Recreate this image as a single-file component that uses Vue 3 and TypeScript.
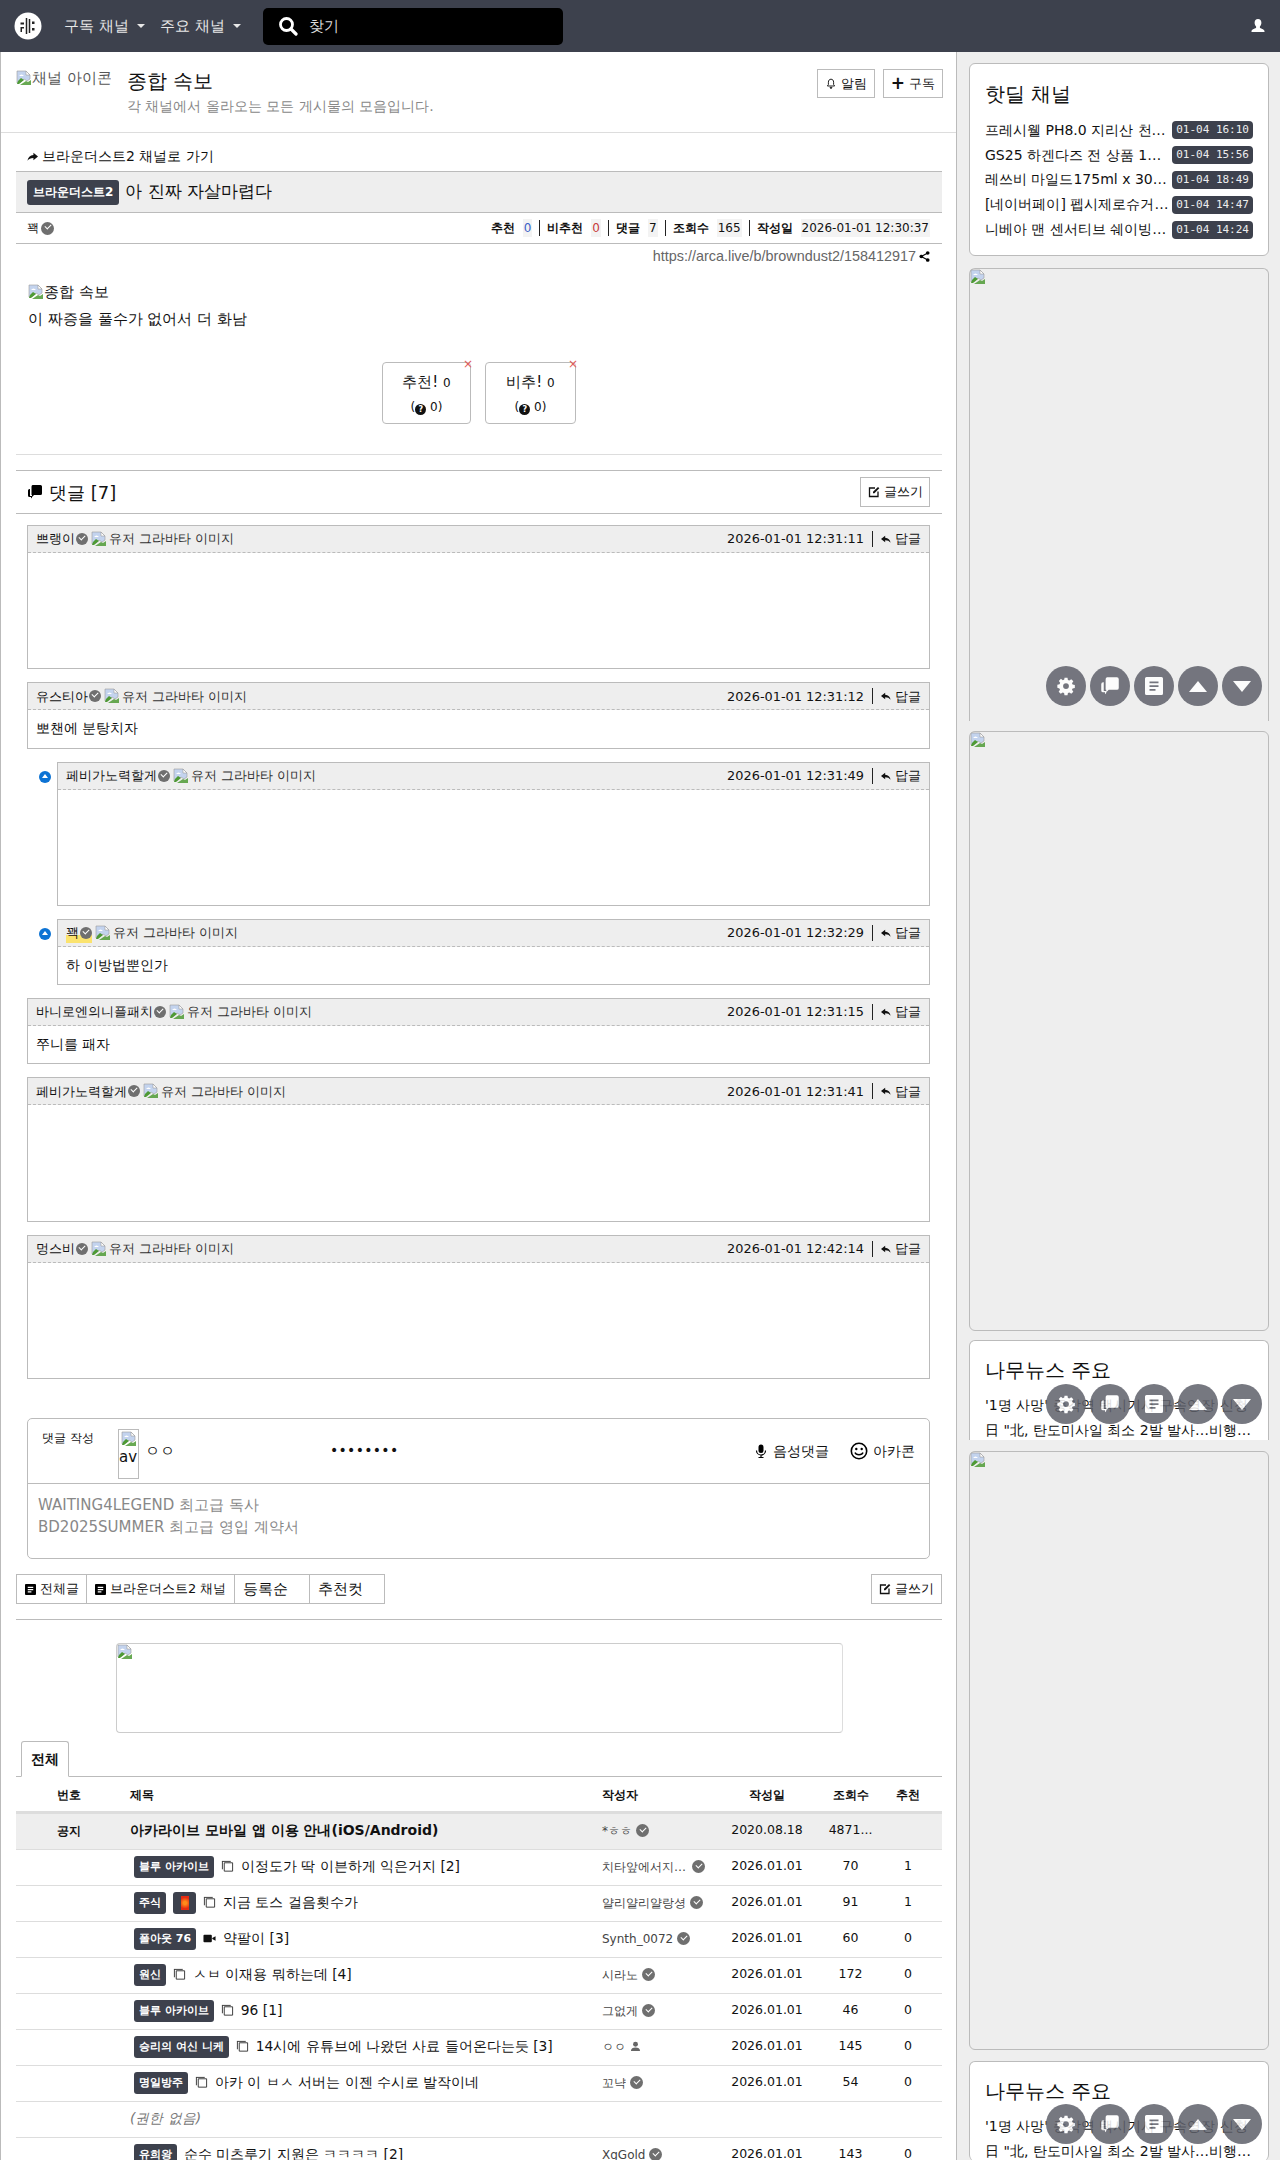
<script setup lang="ts">
interface Cmt { name: string; date: string; text?: string; reply?: boolean; me?: boolean }
const comments: Cmt[] = [
  { name: '쁘랭이', date: '2026-01-01 12:31:11' },
  { name: '유스티아', date: '2026-01-01 12:31:12', text: '뽀챈에 분탕치자' },
  { name: '페비가노력할게', date: '2026-01-01 12:31:49', reply: true },
  { name: '꽥', date: '2026-01-01 12:32:29', text: '하 이방법뿐인가', reply: true, me: true },
  { name: '바니로엔의니플패치', date: '2026-01-01 12:31:15', text: '쭈니를 패자' },
  { name: '페비가노력할게', date: '2026-01-01 12:31:41' },
  { name: '멍스비', date: '2026-01-01 12:42:14' },
]
const deals = [
  ['프레시웰 PH8.0 지리산 천연수 2L', '01-04 16:10'],
  ['GS25 하겐다즈 전 상품 1+1 행사 진행', '01-04 15:56'],
  ['레쓰비 마일드175ml x 30캔 특가 판매', '01-04 18:49'],
  ['[네이버페이] 펩시제로슈거 라임향 특가', '01-04 14:47'],
  ['니베아 맨 센서티브 쉐이빙 폼 200ml', '01-04 14:24'],
]
interface Row { badge?: string; emblem?: boolean; icon?: string; title: string; author?: string; person?: boolean; date?: string; views?: string; votes?: string; denied?: boolean }
const rows: Row[] = [
  { badge: '블루 아카이브', icon: 'doc', title: '이정도가 딱 이븐하게 익은거지 [2]', author: '치타앞에서지랄하기', date: '2026.01.01', views: '70', votes: '1' },
  { badge: '주식', emblem: true, icon: 'doc', title: '지금 토스 걸음횟수가', author: '얄리얄리얄랑셩', date: '2026.01.01', views: '91', votes: '1' },
  { badge: '폴아웃 76', icon: 'video', title: '약팔이 [3]', author: 'Synth_0072', date: '2026.01.01', views: '60', votes: '0' },
  { badge: '원신', icon: 'doc', title: 'ㅅㅂ 이재용 뭐하는데 [4]', author: '시라노', date: '2026.01.01', views: '172', votes: '0' },
  { badge: '블루 아카이브', icon: 'doc', title: '96 [1]', author: '그없게', date: '2026.01.01', views: '46', votes: '0' },
  { badge: '승리의 여신 니케', icon: 'doc', title: '14시에 유튜브에 나왔던 사료 들어온다는듯 [3]', author: 'ㅇㅇ', person: true, date: '2026.01.01', views: '145', votes: '0' },
  { badge: '명일방주', icon: 'doc', title: '아카 이 ㅂㅅ 서버는 이젠 수시로 발작이네', author: '꼬냑', date: '2026.01.01', views: '54', votes: '0' },
  { title: '(권한 없음)', denied: true },
  { badge: '유희왕', title: '순수 미츠루기 지원은 ㅋㅋㅋㅋ [2]', author: 'XgGold', date: '2026.01.01', views: '143', votes: '0' },
]
const fabTops = ['fab-a', 'fab-b', 'fab-c']
const gear = 'M10.2 2h3.6l.5 2.7 1.7.7 2.3-1.6 2.5 2.5-1.6 2.3.7 1.7 2.7.5v3.6l-2.7.5-.7 1.7 1.6 2.3-2.5 2.5-2.3-1.6-1.7.7-.5 2.7h-3.6l-.5-2.7-1.7-.7-2.3 1.6-2.5-2.5 1.6-2.3-.7-1.7L1.6 14v-3.6l2.7-.5.7-1.7-1.6-2.3 2.5-2.5 2.3 1.6 1.7-.7zM12 8.6a3.500 3.500 0 1 0 0 7 3.500 3.500 0 0 0 0-7z'
</script>

<template>
  <div class="page">
    <header class="nav">
      <svg class="logo" viewBox="0 0 28 28" width="28" height="28">
        <circle cx="14" cy="14" r="13.500" fill="#fff" />
        <path d="M12.500 6v16M15.500 7v14" stroke="#222" stroke-width="1.500" fill="none" />
        <path d="M6.500 10.500h3.500v2H6.500zM6.500 15h3.500v1.500H8V20H6.500zM18 9.500h2.500V12H18zM18 16h2.500v2.500H18z" fill="#222" />
      </svg>
      <span class="nav-link">구독 채널<i class="caret"></i></span>
      <span class="nav-link">주요 채널<i class="caret"></i></span>
      <div class="search">
        <svg viewBox="0 0 20 20" width="20" height="20"><circle cx="8.500" cy="8.500" r="6" fill="none" stroke="#fff" stroke-width="2.800" /><path d="M13 13l5 5" stroke="#fff" stroke-width="3.200" stroke-linecap="round" /></svg>
        <span>찾기</span>
      </div>
      <svg class="user" viewBox="0 0 16 16" width="16" height="16"><path d="M8 1c2.200 0 3.400 1.700 3.400 3.800 0 1.500-.6 2.900-1.500 3.600v1.300c0 .6 4.600 1.300 4.600 3.600v.7h-13v-.7c0-2.300 4.600-3 4.600-3.600V8.400c-.9-.7-1.500-2.100-1.500-3.600C4.600 2.700 5.800 1 8 1z" fill="#fff" /></svg>
    </header>

    <div class="body">
      <main class="main">
        <section class="board-head">
          <div class="chan-icon"><svg class="broken" viewBox="0 0 16 16" width="16" height="16"><use href="#broken-img" /></svg>채널 아이콘</div>
          <div class="board-text">
            <div class="board-title">종합 속보</div>
            <div class="board-sub">각 채널에서 올라오는 모든 게시물의 모음입니다.</div>
          </div>
          <div class="board-btns">
            <span class="btn"><svg viewBox="0 0 12 12" width="12" height="12"><path d="M6 1.200c1.700 0 2.600 1.300 2.600 3v2.300l1 1.500H2.400l1-1.500V4.200c0-1.700.9-3 2.600-3zM5 9.400h2L6 10.800z" fill="none" stroke="#222" /></svg>알림</span>
            <span class="btn"><b class="plus">+</b>구독</span>
          </div>
        </section>

        <section class="article">
          <div class="back"><svg viewBox="0 0 12 12" width="11" height="11"><path d="M7 2l5 4-5 4V7.600C4 7.600 2 8.600.5 10.600 1 7 3.400 4.600 7 4.400z" fill="#111" /></svg>브라운더스트2 채널로 가기</div>
          <h1 class="title-bar"><span class="badge big">브라운더스트2</span>아 진짜 자살마렵다</h1>
          <div class="meta">
            <span class="author">꽥<i class="check"></i></span>
            <span class="stats">
              <b>추천</b><em class="blue">0</em><u></u>
              <b>비추천</b><em class="red">0</em><u></u>
              <b>댓글</b><em>7</em><u></u>
              <b>조회수</b><em>165</em><u></u>
              <b>작성일</b><em>2026-01-01 12:30:37</em>
            </span>
          </div>
          <div class="url">https://arca.live/b/browndust2/158412917
            <svg viewBox="0 0 12 12" width="11" height="11"><circle cx="9.500" cy="2.200" r="2" /><circle cx="2.500" cy="6" r="2" /><circle cx="9.500" cy="9.800" r="2" /><path d="M9.500 2.200L2.500 6l7 3.800" fill="none" stroke="#000" stroke-width="1.200" /></svg>
          </div>
          <div class="post">
            <p class="alt"><svg class="broken" viewBox="0 0 16 16" width="16" height="16"><use href="#broken-img" /></svg>종합 속보</p>
            <p>이 짜증을 풀수가 없어서 더 화남</p>
          </div>
          <div class="votes">
            <div class="vote"><i class="x">×</i><div class="v1">추천! <small>0</small></div><div class="v2">(<i class="q">?</i> 0)</div></div>
            <div class="vote"><i class="x">×</i><div class="v1">비추! <small>0</small></div><div class="v2">(<i class="q">?</i> 0)</div></div>
          </div>
          <hr class="light" />
          <div class="cmt-head">
            <span class="cmt-title">
              <svg viewBox="0 0 16 16" width="16" height="16"><path d="M5.500 1h8A1.500 1.500 0 0 1 15 2.500v7a1.500 1.500 0 0 1-1.500 1.500H7l-2 2v-2H4.500V3A2 2 0 0 1 5.500 1z" /><path d="M1 6.500A1.500 1.500 0 0 1 2.500 5H3v7h2v1.500l-1 1v-1.500H2.500A1.500 1.500 0 0 1 1 11.500z" /></svg>
              댓글 [7]
            </span>
            <span class="btn write"><svg viewBox="0 0 12 12" width="12" height="12"><path d="M7 2H1.500v8.500H10V5.500" fill="none" stroke="#111" stroke-width="1.300" /><path d="M5 7.300V5.800L10 1l1.300 1.300L6.400 7.300z" fill="#111" /></svg>글쓰기</span>
          </div>
          <div class="cmts">
            <div v-for="(c, i) in comments" :key="i" class="cmt-row" :class="{ reply: c.reply }">
              <i v-if="c.reply" class="reply-dot"></i>
              <div class="cmt">
                <div class="cmt-top">
                  <span class="cmt-name" :class="{ me: c.me }">{{ c.name }}<i class="check sm"></i></span>
                  <span class="cmt-alt"><svg class="broken" viewBox="0 0 16 16" width="16" height="16"><use href="#broken-img" /></svg>유저 그라바타 이미지</span>
                  <span class="cmt-right">{{ c.date }}<u></u><svg viewBox="0 0 12 12" width="10" height="10"><path d="M5 2L0 6l5 4V7.600c3 0 5 1 6.500 3C11 7 8.600 4.600 5 4.400z" fill="#111" /></svg>답글</span>
                </div>
                <div class="cmt-body" :class="{ tall: !c.text }">{{ c.text }}</div>
              </div>
            </div>
          </div>

          <div class="form">
            <div class="form-top">
              <span class="form-label">댓글 작성</span>
              <span class="avatar"><svg class="broken" viewBox="0 0 16 16" width="16" height="16"><use href="#broken-img" /></svg><span>av</span></span>
              <span class="form-name">ㅇㅇ</span>
              <span class="dots">••••••••</span>
              <span class="form-act">
                <svg viewBox="0 0 14 14" width="14" height="14"><rect x="4.500" y="0.500" width="5" height="8.500" rx="2.500" /><path d="M2.500 6.500a4.500 4.500 0 0 0 9 0M7 11v2.500M4.500 13.500h5" fill="none" stroke="#000" stroke-width="1.200" /></svg>음성댓글
              </span>
              <span class="form-act">
                <svg viewBox="0 0 18 18" width="18" height="18"><circle cx="9" cy="9" r="7.700" fill="none" stroke="#000" stroke-width="1.600" /><circle cx="6.300" cy="7" r="1.200" /><circle cx="11.700" cy="7" r="1.200" /><path d="M5 10.500c1 3 7 3 8 0" fill="none" stroke="#000" stroke-width="1.400" /></svg>아카콘
              </span>
            </div>
            <div class="form-text">WAITING4LEGEND 최고급 독사<br />BD2025SUMMER 최고급 영입 계약서</div>
          </div>

          <div class="toolbar">
            <span class="seg a"><svg viewBox="0 0 12 12" width="11" height="11"><path d="M1 0h10a1 1 0 0 1 1 1v10a1 1 0 0 1-1 1H1a1 1 0 0 1-1-1V1a1 1 0 0 1 1-1zM3 3v1.300h6V3zm0 2.500v1.300h6V5.500zM3 8v1.300h4V8z" fill-rule="evenodd" /></svg>전체글</span>
            <span class="seg b"><svg viewBox="0 0 12 12" width="11" height="11"><path d="M1 0h10a1 1 0 0 1 1 1v10a1 1 0 0 1-1 1H1a1 1 0 0 1-1-1V1a1 1 0 0 1 1-1zM3 3v1.300h6V3zm0 2.500v1.300h6V5.500zM3 8v1.300h4V8z" fill-rule="evenodd" /></svg>브라운더스트2 채널</span>
            <span class="seg c">등록순</span>
            <span class="seg c">추천컷</span>
            <span class="btn write tool-write"><svg viewBox="0 0 12 12" width="12" height="12"><path d="M7 2H1.500v8.500H10V5.500" fill="none" stroke="#111" stroke-width="1.300" /><path d="M5 7.300V5.800L10 1l1.300 1.300L6.400 7.300z" fill="#111" /></svg>글쓰기</span>
          </div>
          <hr class="mid" />
          <div class="adbox"><svg class="broken" viewBox="0 0 16 16" width="16" height="16"><use href="#broken-img" /></svg></div>
          <div class="tabs"><span class="tab">전체</span></div>

          <div class="grid head">
            <span class="c-num">번호</span><span class="c-title">제목</span><span class="c-author">작성자</span><span class="c-center">작성일</span><span class="c-center">조회수</span><span class="c-center">추천</span>
          </div>
          <div class="grid notice">
            <span class="c-num bold">공지</span>
            <span class="c-title strong">아카라이브 모바일 앱 이용 안내(iOS/Android)</span>
            <span class="c-author">*ㅎㅎ<i class="check tb"></i></span>
            <span class="c-center">2020.08.18</span><span class="c-center">4871...</span><span class="c-center"></span>
          </div>
          <div v-for="(r, i) in rows" :key="i" class="grid row">
            <span class="c-num"></span>
            <span class="c-title line" :class="{ denied: r.denied }">
              <span v-if="r.badge" class="badge">{{ r.badge }}</span>
              <span v-if="r.emblem" class="emblem"><i></i></span>
              <svg v-if="r.icon === 'doc'" class="ticon" viewBox="0 0 14 14" width="13" height="13"><path d="M3.500 3h9v9h-9zM1 1.500h9.500" fill="none" stroke="#333" stroke-width="1" /><path d="M1.500 1.500V10" stroke="#333" /></svg>
              <svg v-if="r.icon === 'video'" class="ticon" viewBox="0 0 14 14" width="13" height="13"><rect x="0.500" y="3" width="9" height="8" rx="1" fill="#111" /><path d="M10 6.500l3.500-2v5l-3.500-2z" fill="#111" /></svg>
              <span>{{ r.title }}</span>
            </span>
            <span class="c-author"><span class="name-clip">{{ r.author }}</span><svg v-if="r.person" viewBox="0 0 12 12" width="11" height="11"><circle cx="6" cy="3.500" r="2.700" fill="#666" /><path d="M1 11c0-3 2.200-4 5-4s5 1 5 4z" fill="#666" /></svg><i v-else-if="r.author" class="check tb"></i></span>
            <span class="c-center">{{ r.date }}</span><span class="c-center">{{ r.views }}</span><span class="c-center">{{ r.votes }}</span>
          </div>
        </section>
      </main>

      <aside class="side">
        <div class="card deal">
          <h5>핫딜 채널</h5>
          <div v-for="d in deals" :key="d[1]" class="deal-row"><span class="deal-t">{{ d[0] }}</span><span class="time">{{ d[1] }}</span></div>
        </div>
        <div class="ad ad1 no-bottom"><svg class="broken" viewBox="0 0 16 16" width="16" height="16"><use href="#broken-img" /></svg>
          <div class="fabs" :class="fabTops[0]">
            <span class="fab"><svg viewBox="0 0 24 24" width="20" height="20"><path :d="gear" fill-rule="evenodd" /></svg></span>
            <span class="fab"><svg viewBox="0 0 16 16" width="20" height="20"><path d="M5.500 1h8A1.500 1.500 0 0 1 15 2.500v7a1.500 1.500 0 0 1-1.500 1.500H7l-2 2v-2H4.500V3A2 2 0 0 1 5.500 1z" /><path d="M1 6.500A1.500 1.500 0 0 1 2.500 5H3v7h2v1.500l-1 1v-1.500H2.500A1.500 1.500 0 0 1 1 11.500z" /></svg></span>
            <span class="fab"><svg viewBox="0 0 12 12" width="18" height="18"><path d="M1 0h10a1 1 0 0 1 1 1v10a1 1 0 0 1-1 1H1a1 1 0 0 1-1-1V1a1 1 0 0 1 1-1zM3 3v1.100h6V3zm0 2.500v1.100h6V5.500zM3 8v1.100h4V8z" fill-rule="evenodd" /></svg></span>
            <span class="fab"><i class="tri up"></i></span>
            <span class="fab"><i class="tri down"></i></span>
          </div>
        </div>
        <div class="ad ad2"><svg class="broken" viewBox="0 0 16 16" width="16" height="16"><use href="#broken-img" /></svg></div>
        <div class="card news news1">
          <h5>나무뉴스 주요</h5>
          <div class="news-t">'1명 사망' 종각역 택시기사 구속영장 신청</div>
          <div class="news-t">日 "北, 탄도미사일 최소 2발 발사…비행거리 900km"</div>
          <div class="fabs" :class="fabTops[1]">
            <span class="fab"><svg viewBox="0 0 24 24" width="20" height="20"><path :d="gear" fill-rule="evenodd" /></svg></span>
            <span class="fab"><svg viewBox="0 0 16 16" width="20" height="20"><path d="M5.500 1h8A1.500 1.500 0 0 1 15 2.500v7a1.500 1.500 0 0 1-1.500 1.500H7l-2 2v-2H4.500V3A2 2 0 0 1 5.500 1z" /><path d="M1 6.500A1.500 1.500 0 0 1 2.500 5H3v7h2v1.500l-1 1v-1.500H2.500A1.500 1.500 0 0 1 1 11.500z" /></svg></span>
            <span class="fab"><svg viewBox="0 0 12 12" width="18" height="18"><path d="M1 0h10a1 1 0 0 1 1 1v10a1 1 0 0 1-1 1H1a1 1 0 0 1-1-1V1a1 1 0 0 1 1-1zM3 3v1.100h6V3zm0 2.500v1.100h6V5.500zM3 8v1.100h4V8z" fill-rule="evenodd" /></svg></span>
            <span class="fab"><i class="tri up"></i></span>
            <span class="fab"><i class="tri down"></i></span>
          </div>
        </div>
        <div class="ad ad3"><svg class="broken" viewBox="0 0 16 16" width="16" height="16"><use href="#broken-img" /></svg></div>
        <div class="card news news2">
          <h5>나무뉴스 주요</h5>
          <div class="news-t">'1명 사망' 종각역 택시기사 구속영장 신청</div>
          <div class="news-t">日 "北, 탄도미사일 최소 2발 발사…비행거리 900km"</div>
          <div class="fabs" :class="fabTops[2]">
            <span class="fab"><svg viewBox="0 0 24 24" width="20" height="20"><path :d="gear" fill-rule="evenodd" /></svg></span>
            <span class="fab"><svg viewBox="0 0 16 16" width="20" height="20"><path d="M5.500 1h8A1.500 1.500 0 0 1 15 2.500v7a1.500 1.500 0 0 1-1.500 1.500H7l-2 2v-2H4.500V3A2 2 0 0 1 5.500 1z" /><path d="M1 6.500A1.500 1.500 0 0 1 2.500 5H3v7h2v1.500l-1 1v-1.500H2.500A1.500 1.500 0 0 1 1 11.500z" /></svg></span>
            <span class="fab"><svg viewBox="0 0 12 12" width="18" height="18"><path d="M1 0h10a1 1 0 0 1 1 1v10a1 1 0 0 1-1 1H1a1 1 0 0 1-1-1V1a1 1 0 0 1 1-1zM3 3v1.100h6V3zm0 2.500v1.100h6V5.500zM3 8v1.100h4V8z" fill-rule="evenodd" /></svg></span>
            <span class="fab"><i class="tri up"></i></span>
            <span class="fab"><i class="tri down"></i></span>
          </div>
        </div>
      </aside>
    </div>

    <svg class="defs" width="0" height="0">
      <symbol id="broken-img" viewBox="0 0 16 16">
        <path d="M1 1h9l4 4v4l-3 2-3-2-3 3-4 1z" fill="#c3d3ee" stroke="#9a9a9a" stroke-width=".6" />
        <path d="M10 1v4h4z" fill="#fff" stroke="#9a9a9a" stroke-width=".6" />
        <path d="M2 11l3-3 3 2-5 4H1z" fill="#4e9a35" />
        <path d="M4 15l6-4 2 1 3-2v5z" fill="#4e9a35" opacity=".85" />
        <path d="M3 6c1.500-2 3.500-2 5 0z" fill="#fff" />
      </symbol>
    </svg>
  </div>
</template>

<style>
html, body { margin: 0; background: #eee; }
</style>

<style scoped>
.page { width: 1280px; height: 2160px; overflow: hidden; background: #eee; color: #111; font: 15px/1.5 "DejaVu Sans", sans-serif; }
.defs { position: absolute; }
.nav { height: 52px; background: #3d414d; display: flex; align-items: center; padding: 0 14px; color: #e8e8e8; }
.logo { margin-right: 22px; }
.nav-link { font-size: 15px; margin-right: 15px; display: flex; align-items: center; }
.caret { width: 0; height: 0; border: 4px solid transparent; border-top-color: #e8e8e8; border-bottom: 0; margin-left: 8px; }
.search { margin-left: 7px; width: 300px; height: 37px; background: #000; border-radius: 5px; display: flex; align-items: center; padding-left: 15px; box-sizing: border-box; gap: 11px; color: #ddd; font-size: 15px; }
.user { margin-left: auto; }
.body { display: flex; }
.main { width: 957px; box-sizing: border-box; background: #fff; border-left: 1px solid #bbb; border-right: 1px solid #bbb; height: 2108px; }
.board-head { height: 80px; border-bottom: 1px solid #ddd; position: relative; display: flex; padding-left: 15px; }
.chan-icon { width: 95px; white-space: nowrap; overflow: hidden; margin-top: 15px; height: 22px; font-size: 15px; color: #555; display: flex; align-items: center; }
.broken { display: inline-block; flex: none; vertical-align: -3px; }
.board-text { margin-left: 16px; padding-top: 15px; }
.board-title { font-size: 20px; line-height: 28px; }
.board-sub { font-size: 14px; color: #888; line-height: 22px; }
.board-btns { margin-left: auto; display: flex; gap: 8px; margin-right: 13px; margin-top: 17px; height: 29px; }
.btn { border: 1px solid #bbb; display: inline-flex; align-items: center; justify-content: center; gap: 4px; font-size: 13px; padding: 0 7px; box-sizing: border-box; height: 29px; background: #fff; }
.plus { font-size: 17px; line-height: 1; font-weight: 700; }
.article { padding: 0 14px 0 15px; }
.back { margin-top: 8px; height: 30px; padding-left: 11px; display: flex; align-items: center; gap: 4px; font-size: 14px; }
.title-bar { margin: 0; height: 42px; background: #eee; border-top: 1px solid #bbb; border-bottom: 1px solid #bbb; box-sizing: border-box; font-size: 17px; font-weight: 400; display: flex; align-items: center; padding-left: 11px; gap: 6px; }
.badge { display: inline-block; background: #3d414d; color: #fff; font-size: 11px; font-weight: 700; border-radius: 3px; padding: 0 5px; line-height: 22px; height: 22px; white-space: nowrap; }
.badge.big { font-size: 12px; line-height: 25px; height: 25px; padding: 0 6px; }
.meta { height: 31px; border-bottom: 1px solid #bbb; box-sizing: border-box; display: flex; align-items: center; justify-content: space-between; padding: 0 12px 0 11px; font-size: 12px; }
.author { display: flex; align-items: center; }
.check { display: inline-block; width: 13px; height: 13px; border-radius: 50%; background: #6f6f6f; position: relative; margin-left: 2px; flex: none; }
.check::after { content: ""; position: absolute; left: 3.500px; top: 2.500px; width: 5px; height: 3px; border-left: 1.500px solid #fff; border-bottom: 1.500px solid #fff; transform: rotate(-45deg); }
.check.sm { width: 12px; height: 12px; margin-left: 1px; }
.check.sm::after { left: 3px; top: 2px; }
.check.tb { margin-left: 4px; }
.stats { display: flex; align-items: center; }
.stats b { font-weight: 700; }
.stats em { font-style: normal; background: #f3f3f3; margin-left: 8px; padding: 0 1px; }
.stats .blue { color: #3b62c8; }
.stats .red { color: #c83b3b; }
.stats u { display: inline-block; width: 1px; height: 16px; background: #222; margin: 0 7px; }
.url { height: 25px; display: flex; justify-content: flex-end; align-items: center; padding-right: 12px; gap: 3px; color: #666; font: 14.400px/1.500 "Liberation Sans", sans-serif; }
.post { padding-left: 12px; margin-top: 10px; font-size: 15px; }
.post p { margin: 0; line-height: 27px; }
.votes { display: flex; justify-content: center; gap: 14px; margin-top: 29px; }
.vote { width: 89px; height: 62px; border: 1px solid #bbb; border-radius: 4px; box-sizing: border-box; position: relative; text-align: center; padding-top: 6px; }
.vote:nth-child(2) { width: 91px; }
.x { position: absolute; right: -3px; top: -5px; color: #e0595a; font-size: 12px; line-height: 12px; font-style: normal; }
.v1 { font-size: 15px; line-height: 26px; }
.v1 small { font-size: 12px; }
.v2 { font-size: 12px; line-height: 22px; }
.q { display: inline-block; width: 11px; height: 11px; border-radius: 50%; background: #111; color: #fff; font-size: 8px; line-height: 11px; font-style: normal; font-weight: 700; vertical-align: -1px; }
hr { border: 0; margin: 0; }
.light { border-top: 1px solid #ddd; margin-top: 30px; }
.cmt-head { margin-top: 15px; height: 44px; border-top: 1px solid #bbb; border-bottom: 1px solid #bbb; box-sizing: border-box; display: flex; align-items: center; justify-content: space-between; padding: 0 12px 0 11px; }
.cmt-title { font-size: 18px; display: flex; align-items: center; gap: 6px; }
.write { gap: 4px; width: 70px; height: 30px; padding: 0; font-size: 13px; }
.cmts { margin: 11px 12px 0 11px; display: flex; flex-direction: column; gap: 13px; }
.cmt-row { display: flex; position: relative; }
.reply { padding-left: 30px; }
.reply-dot { position: absolute; left: 12px; top: 9px; width: 12px; height: 12px; border-radius: 50%; background: #0d73d4; }
.reply-dot::after { content: ""; position: absolute; left: 3px; top: 3px; border: 3px solid transparent; border-bottom: 4px solid #fff; border-top: 0; }
.cmt { flex: 1; border: 1px solid #bbb; box-sizing: border-box; min-width: 0; }
.cmt-top { height: 26px; background: #eee; border-bottom: 1px dashed #bbb; display: flex; align-items: center; padding: 0 8px; font-size: 13px; }
.cmt-name { display: inline-flex; align-items: center; font-size: 13px; }
.me { background: linear-gradient(transparent 60%, #fbe36e 60%); }
.cmt-alt { margin-left: 3px; color: #333; display: inline-flex; align-items: center; font-size: 13px; gap: 2px; }
.cmt-right { margin-left: auto; display: flex; align-items: center; font-size: 12.900px; }
.cmt-right u { width: 1px; height: 16px; background: #222; margin: 0 8px; display: inline-block; }
.cmt-right svg { margin-right: 4px; }
.cmt-body { padding: 8px 8px 0; font-size: 14px; line-height: 20px; height: 37.200px; box-sizing: border-box; }
.cmt-body.tall { height: 115.400px; padding: 0; }
.form { margin: 39px 12px 0 11px; border: 1px solid #bbb; border-radius: 5px; height: 141px; box-sizing: border-box; }
.form-top { height: 64px; border-bottom: 1px solid #bbb; display: flex; align-items: flex-start; padding: 0 14px; position: relative; }
.form-label { font-size: 12px; width: 76px; margin-top: 10px; }
.avatar { width: 21px; height: 50px; border: 1px solid #bbb; box-sizing: border-box; margin-top: 10px; overflow: hidden; display: block; line-height: 20px; font-size: 15px; white-space: nowrap; }
.avatar .broken { display: block; margin: 1px 2px 0; }
.form-name { margin: 22px 0 0 6px; font-size: 15px; line-height: 20px; }
.dots { margin: 21px 0 0 155px; font-size: 14px; letter-spacing: .3px; }
.form-act { margin-top: 22px; font-size: 14px; display: flex; align-items: center; gap: 5px; line-height: 20px; }
.dots + .form-act { margin-left: auto; margin-right: 21px; }
.form-text { padding: 10px 10px; color: #888; font-size: 15px; line-height: 22px; }
.toolbar { margin-top: 15px; display: flex; }
.seg { height: 30px; border: 1px solid #bbb; box-sizing: border-box; display: inline-flex; align-items: center; gap: 4px; font-size: 13px; padding-left: 8px; margin-right: -1px; }
.seg.a { width: 71px; }
.seg.b { width: 149px; }
.seg.c { width: 76px; font-size: 15px; }
.tool-write { margin-left: auto; width: 71px; }
.mid { border-top: 1px solid #bbb; margin-top: 15px; }
.adbox { margin: 23px auto 0; width: 727px; height: 90px; border: 1px solid #ccc; border-right-color: #ddd; border-radius: 4px; box-sizing: border-box; }
.adbox .broken { display: block; }
.tabs { margin-top: 8px; height: 36px; border-bottom: 1px solid #bbb; padding-left: 5px; box-sizing: border-box; display: flex; }
.tab { width: 48px; height: 36px; border: 1px solid #bbb; border-bottom: 1px solid #fff; border-radius: 3px 3px 0 0; background: #fff; box-sizing: border-box; text-align: center; font-size: 14px; font-weight: 700; line-height: 34px; }
.grid { display: grid; grid-template-columns: 106px 472px 113px 120px 47px 68px; align-items: center; font-size: 12px; box-sizing: border-box; }
.head { height: 37px; font-weight: 700; font-size: 12px; border-bottom: 3px solid #ddd; padding-top: 1px; }
.notice { height: 36px; background: #eee; border-bottom: 1px solid #ddd; padding-bottom: 2px; }
.row { height: 36px; border-bottom: 1px solid #ddd; padding-bottom: 2px; }
.c-num { text-align: center; }
.bold { font-weight: 700; }
.c-title { padding-left: 8px; font-size: 14px; min-width: 0; white-space: nowrap; }
.head .c-title { font-size: 12px; }
.strong { font-weight: 700; }
.line { display: flex; align-items: center; padding-left: 12px; gap: 7px; font-size: 13.800px; }
.denied { font-style: italic; color: #777; padding-left: 8px; }
.c-author { padding-left: 8px; display: flex; align-items: center; color: #444; font-size: 12px; white-space: nowrap; min-width: 0; }
.head .c-author { color: #111; }
.name-clip { max-width: 86px; overflow: hidden; text-overflow: ellipsis; flex: none; }
.c-author svg { margin-left: 4px; }
.c-center { text-align: center; white-space: nowrap; overflow: hidden; text-overflow: ellipsis; font-size: 12.500px; }
.head .c-center { font-size: 12px; }
.emblem { width: 23px; height: 22px; background: #3d414d; border-radius: 3px; display: flex; align-items: center; justify-content: center; }
.emblem i { width: 8px; height: 14px; background: radial-gradient(circle, #ff8a1a 20%, #e52b12 70%); display: block; }
.ticon { flex: none; }
.side { width: 323px; box-sizing: border-box; padding: 11px 11px 0 12px; display: flex; flex-direction: column; }
.card { background: #fff; border: 1px solid #bbb; border-radius: 6px; box-sizing: border-box; padding: 0 15px; position: relative; }
.card h5 { margin: 0; font-size: 20px; font-weight: 400; line-height: 28px; }
.deal { height: 193px; padding-top: 16px; }
.deal h5 { margin-bottom: 10px; }
.deal-row { display: flex; align-items: center; justify-content: space-between; height: 24.800px; gap: 2px; }
.deal-t { font-size: 14px; white-space: nowrap; overflow: hidden; text-overflow: ellipsis; flex: 1; min-width: 0; }
.time { background: #3d414d; color: #eee; border-radius: 4px; font: 11px/18px "DejaVu Sans Mono", monospace; padding: 0 4px; flex: none; height: 18px; }
.ad { background: #eee; border: 1px solid #bbb; border-radius: 6px; box-sizing: border-box; position: relative; }
.ad .broken { display: block; width: 16px; }
.no-bottom { border-bottom: 0; border-radius: 6px 6px 0 0; }
.ad1 { height: 453px; margin-top: 12px; }
.ad2 { height: 600px; margin-top: 10px; }
.news { height: 100px; margin-top: 9px; border-bottom: 0; padding-top: 15px; }
.news1 { border-radius: 6px 6px 0 0; }
.news2 { margin-top: 11px; }
.ad3 { height: 599px; margin-top: 11px; }
.news h5 { margin-bottom: 9px; }
.news-t { font-size: 14px; line-height: 25px; white-space: nowrap; overflow: hidden; text-overflow: ellipsis; }
.fabs { position: absolute; display: flex; gap: 4px; right: 6px; }
.fab-a { top: 397px; }
.fab-b { top: 43px; }
.fab-c { top: 42px; }
.fab { width: 40px; height: 40px; border-radius: 50%; background: #5f616b; opacity: .85; display: flex; align-items: center; justify-content: center; }
.fab svg { fill: #fff; }
.tri { width: 0; height: 0; border-left: 9px solid transparent; border-right: 9px solid transparent; }
.tri.up { border-bottom: 11px solid #fff; }
.tri.down { border-top: 11px solid #fff; }
svg { flex: none; }
</style>
